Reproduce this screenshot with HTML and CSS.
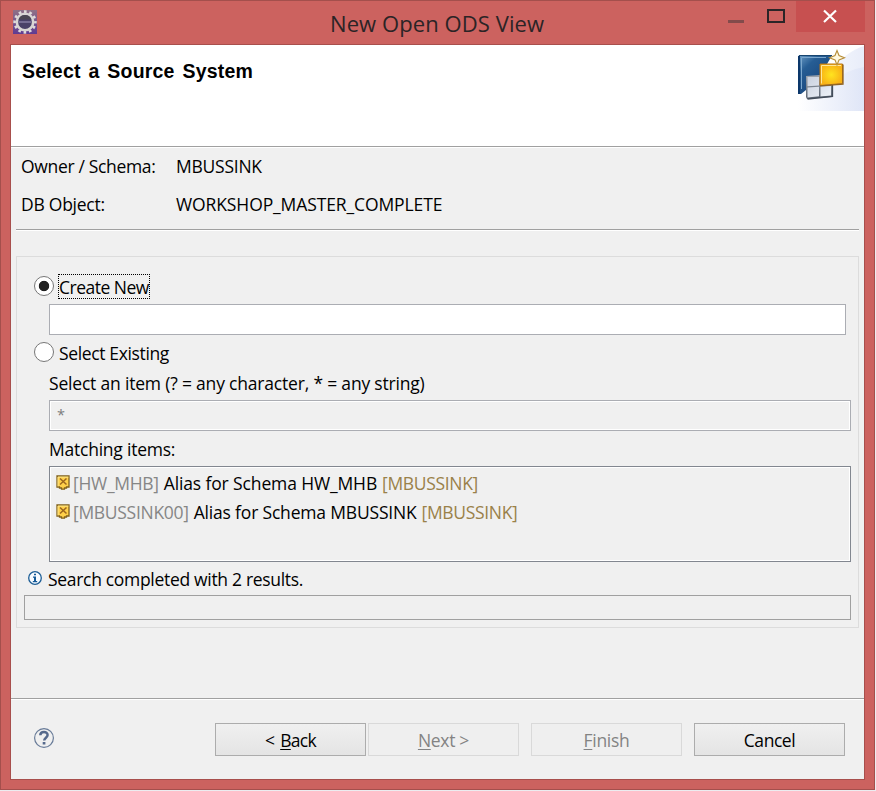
FILE: index.html
```html
<!DOCTYPE html>
<html lang="en">
<head>
<meta charset="utf-8">
<title>New Open ODS View</title>
<link rel="stylesheet" href="styles.css">
</head>
<body>
<div class="window">
  <header class="titlebar">
    <svg class="app-icon" width="24" height="24" viewBox="0 0 24 24">
      <defs><linearGradient id="app" x1="0" y1="0" x2="0" y2="1"><stop offset="0" stop-color="#8f7186"/><stop offset="1" stop-color="#5f3b92"/></linearGradient></defs>
      <rect width="24" height="24" fill="url(#app)"/>
      <circle cx="12" cy="12" r="10.400" fill="none" stroke="#dedbda" stroke-width="2.600" stroke-dasharray="2.700 2.745" stroke-dashoffset="1.350"/>
      <circle cx="12" cy="12" r="8.200" fill="#4a4168" stroke="#d9d6d4" stroke-width="2.600"/>
      <path d="M5.500 9.500a7 7 0 0 1 13 0z" fill="#4b4752"/>
      <path d="M5.500 12h13" stroke="#766d94" stroke-width="2"/>
    </svg>
    <h1 class="title">New Open ODS View</h1>
    <div class="controls">
      <svg width="137" height="31" viewBox="0 0 137 31">
        <rect x="0" y="19" width="16" height="3" fill="#834b4b"/>
        <rect x="40" y="9" width="16" height="12" fill="none" stroke="#2a2527" stroke-width="2"/>
        <rect x="68" width="69" height="31" fill="#c75050"/>
        <path d="M96 9.500l12 11.500M108 9.500L96 21" stroke="#fff" stroke-width="2.200"/>
      </svg>
    </div>
  </header>
  <main class="client">
    <section class="banner">
      <h2>Select a Source System</h2>
      <svg width="66" height="66" viewBox="0 0 66 66">
        <defs>
          <linearGradient id="haze"><stop offset="0" stop-color="#fff"/><stop offset="1" stop-color="#dce3f6"/></linearGradient>
          <linearGradient id="blue" x1="0" y1="0" x2=".8" y2="1"><stop offset="0" stop-color="#6b9cc6"/><stop offset=".3" stop-color="#265d94"/><stop offset="1" stop-color="#123d73"/></linearGradient>
          <radialGradient id="gold"><stop offset="0" stop-color="#ffe41f"/><stop offset="1" stop-color="#f8b216"/></radialGradient>
          <linearGradient id="pane" x1="0" y1="0" x2="1" y2="1"><stop offset="0" stop-color="#c9d1de"/><stop offset="1" stop-color="#eef2f8"/></linearGradient>
          <linearGradient id="edge" x1="0" y1="0" x2="0" y2="1"><stop offset="0" stop-color="#9ba3ad"/><stop offset="1" stop-color="#596370"/></linearGradient>
        </defs>
        <path d="M0 66V45C30 34 42 8 66 1v65z" fill="url(#haze)" opacity=".65"/>
        <path d="M0 66V50C30 42 42 26 66 22v44z" fill="url(#haze)" opacity=".75"/>
        <path d="M.5 10.500H34L22 31H8v14l-5 4H.5z" fill="url(#blue)"/>
        <path d="M1 10.500h33" stroke="#18456f"/>
        <path d="M1 11v38" stroke="#0c376a" stroke-width="2"/>
        <path d="M3.500 44V12.500H28" fill="none" stroke="#7ba7cd"/>
        <path d="M8 31l14-1v10h12v12l-25 2-1-2z" fill="url(#edge)"/>
        <path d="M9.500 32h11.500v8.500l-11.500.7zM9.500 42.500l11.500-.7v9.500L9.500 52.500zM22.500 41.500l10.500-.5v9.500L22.500 51.500z" fill="url(#pane)"/>
        <path d="M9.500 54l25-2.500V40" fill="none" stroke="#434d5a" stroke-width="1.300"/>
        <path d="M22 19h22.500v19.500L22 40.500z" fill="url(#gold)" stroke="#b87517"/>
        <path d="M23.500 38.500V20.500H43" fill="none" stroke="#ffe799"/>
        <path d="M22 40.800l23-1.700V19.500" fill="none" stroke="#8e6322" stroke-width="1.300"/>
        <path d="M39 5.500l2 5 5.500 2.200-5.500 2.200-2 5.100-2-5.100-5.500-2.200 5.500-2.200z" fill="#fff8df" stroke="#b78d38" stroke-width="1.100"/>
      </svg>
    </section>
    <section class="info">
      <div class="info-row"><span class="info-key owner">Owner / Schema:</span><span>MBUSSINK</span></div>
      <div class="info-row"><span class="info-key">DB Object:</span><span class="table-name">WORKSHOP_MASTER_COMPLETE</span></div>
    </section>
    <section class="group">
      <div class="option">
        <span class="radio checked"></span><span class="option-label focused">Create New</span>
      </div>
      <div class="field new-name"></div>
      <div class="option">
        <span class="radio"></span><span class="option-label existing">Select Existing</span>
      </div>
      <div class="caption hint">Select an item (? = any character, * = any string)</div>
      <div class="field filter">*</div>
      <div class="caption matching">Matching items:</div>
      <div class="list">
        <div class="item">
          <svg width="14" height="15" viewBox="0 0 14 15"><path d="M1 1h12v11h-2.500v1H8.500v1.200H5.500V13h-2v-1H1z" fill="#ffd04a" stroke="#80601b" stroke-width="1.300"/><path d="M2 11.500V2h10.500" fill="none" stroke="#ffef9f" stroke-width=".8"/><path d="M4 3.500l6.500 6M10.500 3.500L4 9.500" stroke="#9c661e" stroke-width="1.500"/></svg>
          <span class="alias">[HW_MHB]</span><span class="desc-hw">Alias for Schema HW_MHB</span><span class="owner-tag">[MBUSSINK]</span>
        </div>
        <div class="item">
          <svg width="14" height="15" viewBox="0 0 14 15"><path d="M1 1h12v11h-2.500v1H8.500v1.200H5.500V13h-2v-1H1z" fill="#ffd04a" stroke="#80601b" stroke-width="1.300"/><path d="M2 11.500V2h10.500" fill="none" stroke="#ffef9f" stroke-width=".8"/><path d="M4 3.500l6.500 6M10.500 3.500L4 9.500" stroke="#9c661e" stroke-width="1.500"/></svg>
          <span class="alias">[MBUSSINK00]</span><span class="desc-mb">Alias for Schema MBUSSINK</span><span class="owner-tag">[MBUSSINK]</span>
        </div>
      </div>
      <div class="status">
        <svg width="14" height="14" viewBox="0 0 14 14"><circle cx="7" cy="7" r="6.300" fill="#f7fbff" stroke="#1d5e96" stroke-width="1.300"/><path d="M6 2.700h2v1.600H6zM5 5.500h3v4.600h1.200v1.200H4.800v-1.200H6V6.700H5z" fill="#145a98"/></svg>
        <span>Search completed with 2 results.</span>
      </div>
      <div class="progress"></div>
    </section>
    <footer class="footer">
      <svg class="help" width="20" height="20" viewBox="0 0 20 20"><circle cx="10" cy="10" r="9.400" fill="#f0f0f0" stroke="#687b98" stroke-width="1.200"/><path d="M6.300 7.300C6.300 2.900 13.600 3 13.600 7c0 2.600-3.400 2.800-3.400 5.600" fill="none" stroke="#566a8c" stroke-width="2.500"/><rect x="8.700" y="14" width="2.700" height="2.500" fill="#566a8c"/></svg>
      <div class="button back"><span>&lt; <u>B</u>ack</span></div>
      <div class="button disabled next"><span><u>N</u>ext &gt;</span></div>
      <div class="button disabled finish"><span><u>F</u>inish</span></div>
      <div class="button cancel"><span>Cancel</span></div>
    </footer>
  </main>
</div>
</body>
</html>
```
FILE: styles.css
```css
* { box-sizing: border-box; }
body {
  margin: 0;
  height: 791px;
  overflow: hidden;
  background: #ececf0;
  color: #000;
  font: 17.5px/24px "Open Sans", "Noto Sans", sans-serif;
  letter-spacing: -0.25px;
}
svg { display: block; flex: none; }
h1, h2 { margin: 0; }
.window {
  width: 875px;
  height: 790px;
  border: 1px solid #a44f4c;
  background: #cc625f;
  padding: 0 9px 9px;
}
.titlebar { display: flex; height: 43px; align-items: flex-start; }
.app-icon { margin: 9px 0 0 3px; }
.title {
  margin: 6px 0 0 293px;
  width: 398px;
  font-size: 22px;
  font-weight: 400;
  line-height: 32px;
  letter-spacing: 0.08px;
  color: #2b2426;
}
.client {
  display: flex;
  flex-direction: column;
  height: 736px;
  border: 1px solid #a84f4c;
  background: #f0f0f0;
}
.banner {
  display: flex;
  justify-content: space-between;
  height: 103px;
  flex: none;
  padding-left: 11px;
  background: #fff;
  border-bottom: 1px solid #fff;
  box-shadow: inset 0 -1px #a0a0a0;
}
.banner h2 {
  margin-top: 14px;
  font: bold 19.5px/24px "Liberation Sans", sans-serif;
  letter-spacing: 0.2px;
  word-spacing: 2.2px;
}
.info {
  display: flex;
  flex-direction: column;
  gap: 14px;
  margin: 0 5px;
  padding: 6px 0 13px 5px;
  border-bottom: 1px solid #a0a0a0;
  box-shadow: 0 1px #fff;
}
.info-row { display: flex; white-space: nowrap; }
.info-key { width: 155px; }
.owner { letter-spacing: -0.33px; }
.table-name { letter-spacing: -0.11px; }
.group {
  margin: 26px 5px 0;
  height: 372px;
  flex: none;
  border: 1px solid #dcdcdc;
  padding: 17px 7px 0;
  white-space: nowrap;
}
.option { display: flex; gap: 4px; height: 25px; padding-left: 10px; }
.radio {
  width: 20px;
  height: 20px;
  margin-top: 2px;
  border: 1px solid #777;
  border-radius: 50%;
  background: #fff;
}
.checked { background: radial-gradient(circle, #202020 4.8px, #fff 5.6px); }
.option-label {
  width: 92px;
  height: 25px;
  border: 1px solid transparent;
  letter-spacing: -0.5px;
}
.focused { border: 1px dotted #000; }
.existing { width: auto; letter-spacing: -0.36px; }
.field { height: 31px; margin-left: 25px; border: 1px solid #abadb3; }
.new-name { margin-top: 5px; margin-bottom: 5px; margin-right: 5px; background: #fff; }
.caption { margin: 6px 0 5px 25px; }
.hint { letter-spacing: -0.19px; }
.matching { letter-spacing: -0.23px; }
.filter { padding: 2px 7px; font-size: 14.5px; color: #7c7c7c; box-shadow: inset 0 0 0 1px #fff; }
.list {
  height: 96px;
  margin-left: 25px;
  padding: 4px 6px;
  border: 1px solid #828790;
  box-shadow: inset 0 0 0 1px #fff;
}
.item { display: flex; gap: 5px; height: 29px; }
.item svg { margin: 4px -2px 0 0; }
.alias { color: #868686; letter-spacing: -0.3px; }
.desc-hw { letter-spacing: -0.13px; }
.desc-mb { letter-spacing: -0.18px; }
.owner-tag { color: #9a8149; letter-spacing: -0.33px; }
.status { display: flex; gap: 6px; margin: 5px 0 4px 4px; letter-spacing: -0.31px; }
.status svg { margin-top: 4px; }
.progress { height: 25px; border: 1px solid #a0a0a0; }
.footer {
  display: flex;
  align-items: flex-start;
  margin-top: auto;
  height: 81px;
  padding: 24px 19px 0 23px;
  border-top: 1px solid #a0a0a0;
  box-shadow: inset 0 1px #fff;
}
.help { margin: 5px 161px 0 0; }
.button {
  width: 151px;
  height: 33px;
  padding-top: 4px;
  border: 1px solid #acacac;
  background: linear-gradient(#f0f0f0, #e4e4e4);
  text-align: center;
}
.back { margin-right: 2px; letter-spacing: -0.7px; word-spacing: 2px; }
.next, .finish { margin-right: 12px; }
.disabled { background: #efefef; border-color: #d9d9d9; color: #838383; letter-spacing: -0.3px; }
.cancel { letter-spacing: -0.45px; }
.button u { text-decoration-thickness: 1px; text-underline-offset: 2px; }
```
